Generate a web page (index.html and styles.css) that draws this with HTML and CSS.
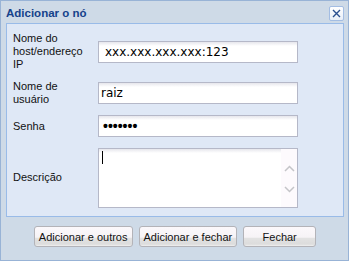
FILE: index.html
```html
<!DOCTYPE html>
<html lang="pt">
<head>
<meta charset="utf-8">
<link rel="stylesheet" href="styles.css">
</head>
<body>
<div class="window">
  <div class="header">
    <span class="title">Adicionar o nó</span>
    <button class="close" type="button" aria-label="Fechar">
      <svg width="9" height="9" viewBox="0 0 9 9"><path d="M1 1L8 8M8 1L1 8" stroke="#2a4f8f" stroke-width="1.4" fill="none"/></svg>
    </button>
  </div>
  <div class="panel">
    <form class="form">
      <label class="label" for="host">Nome do host/endereço IP</label>
      <input class="field host" id="host" type="text" value="xxx.xxx.xxx.xxx:123">
      <label class="label" for="user">Nome de usuário</label>
      <input class="field" id="user" type="text" value="raiz">
      <label class="label" for="pass">Senha</label>
      <div class="field pass" id="pass">•••••••</div>
      <label class="label">Descrição</label>
      <div class="area">
        <div class="area-text"><span class="caret"></span></div>
        <div class="scroll">
          <svg width="11" height="7" viewBox="0 0 11 7"><path d="M1 6L5.5 1.5L10 6" stroke="#c4c4c8" stroke-width="1.5" fill="none"/></svg>
          <svg width="11" height="7" viewBox="0 0 11 7"><path d="M1 1L5.5 5.5L10 1" stroke="#c4c4c8" stroke-width="1.5" fill="none"/></svg>
        </div>
      </div>
    </form>
  </div>
  <div class="footer">
    <button class="btn" type="button">Adicionar e outros</button>
    <button class="btn" type="button">Adicionar e fechar</button>
    <button class="btn btn-close" type="button">Fechar</button>
  </div>
</div>
</body>
</html>
```
FILE: styles.css
```css
html, body { margin: 0; padding: 0; background: #fff; }
body { font-family: "Liberation Sans", Arial, sans-serif; font-size: 11px; color: #111; }

.window {
  box-sizing: border-box;
  width: 349px;
  height: 261px;
  border: 1px solid #98b3d6;
  background: #cedae7;
  padding: 0 4px 0 5px;
  display: flex;
  flex-direction: column;
}

.header {
  height: 22px;
  display: flex;
  align-items: center;
  justify-content: space-between;
}
.title {
  font-weight: bold;
  font-size: 11.5px;
  color: #15428b;
  line-height: 14px;
  margin-top: 2px;
}
.close {
  box-sizing: border-box;
  width: 15px;
  height: 15px;
  padding: 0;
  margin-top: 3px;
  border: 1px solid #a3bde3;
  border-radius: 2px;
  background: linear-gradient(#ffffff, #e8eef8);
  display: flex;
  align-items: center;
  justify-content: center;
}

.panel {
  box-sizing: border-box;
  height: 194px;
  border: 1px solid #99bbe8;
  background: #dfe8f6;
}

.form {
  display: grid;
  grid-template-columns: 85px 200px;
  align-items: center;
  row-gap: 9px;
  padding: 8px 0 0 6px;
  margin: 0;
}
.label { line-height: 13px; padding-right: 12px; }

.field {
  box-sizing: border-box;
  width: 200px;
  height: 22px;
  margin: 0;
  border: 1px solid #b5b8c8;
  background: linear-gradient(#e6e6ec 0, #ffffff 4px);
  font-family: "DejaVu Sans", Verdana, sans-serif;
  font-size: 12px;
  color: #000;
  padding: 0 2px;
  outline: none;
}
.host { padding-left: 6px; }
.pass {
  display: flex;
  align-items: center;
  padding-left: 4px;
  font-family: "Liberation Sans", Arial, sans-serif;
  font-size: 14px;
  letter-spacing: 0;
  font-weight: bold;
}

.area {
  box-sizing: border-box;
  width: 200px;
  height: 60px;
  margin-top: 2px;
  border: 1px solid #b5b8c8;
  background: linear-gradient(#e6e6ec 0, #ffffff 4px);
  display: flex;
}
.area-text { flex: 1; padding: 2px 0 0 3px; }
.caret { display: block; width: 1px; height: 13px; background: #000; }
.scroll {
  width: 16px;
  background: #fdfafd;
  display: flex;
  flex-direction: column;
  align-items: center;
  justify-content: center;
  gap: 14px;
  padding-top: 2px;
}

.footer {
  display: flex;
  justify-content: center;
  gap: 6px;
  padding-top: 9px;
}
.btn {
  box-sizing: border-box;
  height: 21px;
  padding: 0 4px;
  border: 1px solid #b3b3b8;
  border-radius: 3px;
  background: linear-gradient(#fbf8fb 0, #f6f3f6 55%, #e3e3e3 56%, #dcdcdc 90%, #f0f0f0 100%);
  font-family: "Liberation Sans", Arial, sans-serif;
  font-size: 11px;
  color: #111;
}
.btn-close { min-width: 73px; }
```
